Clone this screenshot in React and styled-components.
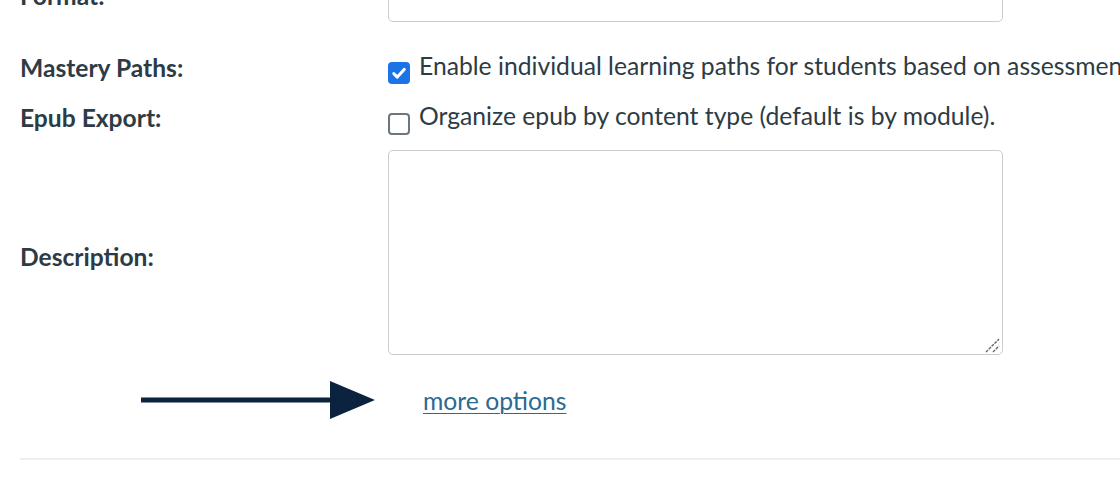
import React from 'react';
import styled, { createGlobalStyle } from 'styled-components';

const GlobalStyle = createGlobalStyle`
  html, body {
    margin: 0;
    padding: 0;
    background: #fff;
    overflow: hidden;
  }
  body {
    font-family: Lato, "Open Sans", "Liberation Sans", sans-serif;
    color: #2d3b45;
  }
`

const Page = styled.div`
  width: 1120px;
  height: 485px;
  overflow: hidden;
`
const Form = styled.div`
  margin-top: -22px;
  padding-left: 20px;
`
const Row = styled.div`
  display: grid;
  grid-template-columns: 368px 1fr;
  align-items: center;
  height: ${p => p.h}px;
  margin-top: ${p => p.mt || 0}px;
`
const Label = styled.div`
  font-size: 24.6px;
  line-height: 30px;
  font-weight: 700;
  white-space: nowrap;
  padding-top: ${p => p.pt || 0}px;
  padding-bottom: ${p => p.pb || 0}px;
`
const TextInput = styled.div`
  width: 613px;
  height: 42px;
  border: 1px solid #c7cdd1;
  border-radius: 5px;
  box-sizing: content-box;
`
const CheckLine = styled.label`
  display: flex;
  align-items: flex-start;
  gap: 9px;
  font-size: 24.7px;
  line-height: 30px;
  white-space: nowrap;
`
const Box = styled.span`
  flex: none;
  width: 22px;
  height: 22px;
  margin-top: ${p => p.top}px;
  box-sizing: border-box;
  border-radius: 4px;
  border: ${p => (p.checked ? 'none' : '2px solid #6b7780')};
  background: ${p => (p.checked ? '#1c73e8' : '#fff')};
  display: flex;
  align-items: center;
  justify-content: center;
`
const AreaWrap = styled.div`
  position: relative;
  width: 615px;
  height: 205px;
`
const TextArea = styled.textarea`
  display: block;
  width: 100%;
  height: 100%;
  box-sizing: border-box;
  border: 1px solid #c7cdd1;
  border-radius: 5px;
  resize: none;
  margin: 0;
`
const Grip = styled.svg`
  position: absolute;
  right: 3px;
  bottom: 2px;
  pointer-events: none;
`
const ArrowCell = styled.div`
  display: flex;
  justify-content: flex-end;
  padding-right: 13px;
`
const MoreLink = styled.a`
  margin-left: 35px;
  font-size: 24.7px;
  color: #2b6a93;
  text-decoration: underline;
  text-underline-offset: 3px;
  text-decoration-thickness: 1px;
  cursor: pointer;
`
const Divider = styled.hr`
  margin: 38px 0 0;
  border: none;
  height: 2px;
  background: #eceeef;
`

function Check({ checked, top }) {
  return (
    <Box checked={checked} top={top}>
      {checked && (
        <svg width="16" height="16" viewBox="0 0 16 16">
          <path d="M2.8 8.6l3.5 3.5L13.2 4.4" fill="none" stroke="#fff" strokeWidth="3" strokeLinecap="round" strokeLinejoin="round" />
        </svg>
      )}
    </Box>
  );
}

function Arrow() {
  return (
    <svg width="234" height="40" viewBox="0 0 234 40">
      <rect x="0" y="17.5" width="192" height="5" fill="#0c2340" />
      <polygon points="189,1 234,20 189,39" fill="#0c2340" />
    </svg>
  );
}

export default function App() {
  return (
    <Page>
      <GlobalStyle />
      <Form>
        <Row h={44}>
          <Label pb={9}>Format:</Label>
          <TextInput />
        </Row>
        <Row h={30} mt={29}>
          <Label>Mastery Paths:</Label>
          <CheckLine>
            <Check checked top={11} />
            Enable individual learning paths for students based on assessment results.
          </CheckLine>
        </Row>
        <Row h={30} mt={20}>
          <Label>Epub Export:</Label>
          <CheckLine>
            <Check top={12} />
            Organize epub by content type (default is by module).
          </CheckLine>
        </Row>
        <Row h={205} mt={19}>
          <Label pt={8}>Description:</Label>
          <AreaWrap>
            <TextArea />
            <Grip width="16" height="16" viewBox="0 0 16 16">
              <path d="M2 15L15 2M9 15L15 9" stroke="#666" strokeWidth="1.4" strokeDasharray="3 1" />
            </Grip>
          </AreaWrap>
        </Row>
        <Row h={40} mt={25}>
          <ArrowCell>
            <Arrow />
          </ArrowCell>
          <div>
            <MoreLink>more options</MoreLink>
          </div>
        </Row>
        <Divider />
      </Form>
    </Page>
  );
}
